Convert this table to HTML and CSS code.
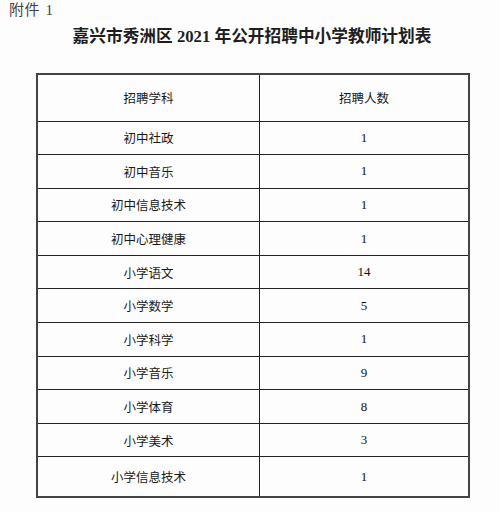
FILE: index.html
```html
<!DOCTYPE html>
<html lang="zh-CN">
<head>
<meta charset="utf-8">
<link rel="stylesheet" href="styles.css">
</head>
<body>
<div class="page">
  <div class="annex">附件 1</div>
  <h1 class="title">嘉兴市秀洲区 2021 年公开招聘中小学教师计划表</h1>
  <table class="plan">
    <thead>
      <tr class="head"><th>招聘学科</th><th>招聘人数</th></tr>
    </thead>
    <tbody>
      <tr><td>初中社政</td><td class="num">1</td></tr>
      <tr><td>初中音乐</td><td class="num">1</td></tr>
      <tr><td>初中信息技术</td><td class="num">1</td></tr>
      <tr><td>初中心理健康</td><td class="num">1</td></tr>
      <tr><td>小学语文</td><td class="num">14</td></tr>
      <tr><td>小学数学</td><td class="num">5</td></tr>
      <tr><td>小学科学</td><td class="num">1</td></tr>
      <tr><td>小学音乐</td><td class="num">9</td></tr>
      <tr><td>小学体育</td><td class="num">8</td></tr>
      <tr><td>小学美术</td><td class="num">3</td></tr>
      <tr class="last"><td>小学信息技术</td><td class="num">1</td></tr>
    </tbody>
  </table>
</div>
</body>
</html>
```
FILE: styles.css
```css
html, body {
  margin: 0;
  padding: 0;
  background: #fdfdfd;
}

.page {
  width: 500px;
  height: 512px;
  font-family: "Liberation Serif", "Noto Sans CJK SC", serif;
  color: #222;
}

.annex {
  padding: 0 0 0 9px;
  height: 21px;
  font-size: 15px;
  line-height: 21px;
  color: #444;
  letter-spacing: 0.6px;
  word-spacing: 1px;
}

.title {
  margin: 4px 0 0 0;
  text-align: center;
  font-size: 16.7px;
  line-height: 24px;
  font-weight: bold;
  color: #1e1e1e;
  padding-left: 4px;
}

.plan {
  margin: 24px 0 0 36px;
  width: 434px;
  border-collapse: collapse;
  table-layout: fixed;
  border: 2px solid #444;
}

.plan th,
.plan td {
  border: 1px solid #222;
  padding: 0;
  text-align: center;
  vertical-align: middle;
  font-size: 12.5px;
  font-weight: normal;
  color: #1a1a1a;
  font-family: "Noto Sans CJK SC", sans-serif;
}

.plan th:first-child,
.plan td:first-child {
  width: 221px;
}

.plan td.num {
  font-family: "Liberation Serif", serif;
  font-size: 13px;
  color: #111;
}

.plan tr.head {
  height: 47px;
}

.plan tbody tr {
  height: 33.6px;
}

.plan tbody tr.last {
  height: 40px;
}
```
